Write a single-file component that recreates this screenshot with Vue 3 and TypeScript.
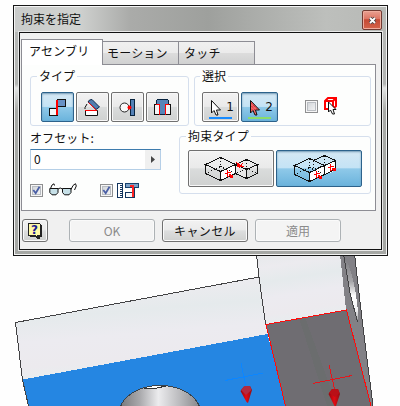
<script setup lang="ts">
import { ref } from 'vue'

const tabs: string[] = ['アセンブリ', 'モーション', 'タッチ']
const activeTab = ref(0)
const constraint = ref(0)
const selection = ref(2)
const solution = ref(1)
const offset = ref('0')
const pickPart = ref(false)
const preview = ref(true)
const predict = ref(true)
</script>

<template>
  <main class="stage">
    <svg class="scene" viewBox="0 0 400 406" width="400" height="406">
      <defs>
        <linearGradient id="face" x1="0" y1="0" x2=".2" y2="1">
          <stop offset="0" stop-color="#e6e9eb" /><stop offset=".2" stop-color="#ecebef" />
          <stop offset=".4" stop-color="#e5eaec" /><stop offset=".62" stop-color="#ecebf0" />
          <stop offset=".85" stop-color="#eceaee" /><stop offset="1" stop-color="#e7edef" />
        </linearGradient>
        <linearGradient id="bore" x1="0" x2="1">
          <stop offset="0" stop-color="#77777a" /><stop offset=".25" stop-color="#a9a9ac" />
          <stop offset=".48" stop-color="#ececee" /><stop offset=".75" stop-color="#b9b9bc" />
          <stop offset="1" stop-color="#858589" />
        </linearGradient>
        <linearGradient id="slot" x1="0" y1="0" x2="0" y2="1">
          <stop offset="0" stop-color="#77777b" /><stop offset=".4" stop-color="#a5a5a8" />
          <stop offset=".62" stop-color="#fff" /><stop offset=".82" stop-color="#f2f2f4" />
          <stop offset="1" stop-color="#96969a" />
        </linearGradient>
        <linearGradient id="cone" x1="0" x2="1">
          <stop offset="0" stop-color="#930810" /><stop offset=".5" stop-color="#e20b12" /><stop offset="1" stop-color="#8c1015" />
        </linearGradient>
      </defs>
      <g shape-rendering="crispEdges">
        <path d="M15.500 322.500 259 277 268 334 23 380Z" fill="url(#face)" />
        <path d="M256 254H340L347 310 266 325Z" fill="url(#face)" />
        <path d="M340 254H354L373 406H371L346 310Z" fill="#828186" />
        <path d="M23 379.500 267.500 334 285.500 406H28.500Z" fill="#2586e2" />
        <path d="M266 324.500 347 310 371 406H285.500Z" fill="#6f6d72" />
        <path d="M299 318 305 317 337 406H327Z" fill="#6b6d6e" />
        <path d="M343.500 254Q357 280 358.500 322 350 300 343.500 254Z" fill="url(#slot)" />
        <ellipse cx="160" cy="413" rx="40.500" ry="27.500" fill="url(#bore)" stroke="#38424b" />
        <path d="M145 388 154 386 165 387 157 388Z" fill="#fff" />
        <path d="M144 388H157L166 386" fill="none" stroke="#333" />
        <path d="M28.500 406 22.500 380 15.500 322.500 259 277M256.500 254 259 277 265.500 324M343.500 254 350 293 357.500 322M354.500 254 362.500 323 373 406" fill="none" stroke="#424244" />
        <path d="M285.500 406 266 324.500 346.500 310 371 406" fill="none" stroke="#ff0b0b" />
        <path d="M225 380.500 263 373M241 363 246 387" fill="none" stroke="#0c86ff" />
        <path d="M313 383.500 352 375.500M329 365 335 391" fill="none" stroke="#e6161b" />
      </g>
      <path d="M240.500 391 244 386.500 250 386 252 390 248 403 246.500 402Z" fill="url(#cone)" />
      <path d="M241 390 244 386.500 250 386 251.500 390 246 395Z" fill="#b32a3f" />
      <path d="M328.500 394 332 389 338 389 340 394 336 406H334.500Z" fill="url(#cone)" />
      <path d="M329 393 332 389 338 389 339.500 393 335 397Z" fill="#b91017" />
    </svg>

    <section class="dialog">
      <header class="titlebar">
        <h1>拘束を指定</h1>
        <button class="close" aria-label="閉じる">
          <svg width="9" height="9" viewBox="0 0 9 9">
            <path d="M2 2 7 7M7 2 2 7" stroke="#4a4245" stroke-width="3.400" />
            <path d="M2 2 7 7M7 2 2 7" stroke="#fff" stroke-width="1.800" />
          </svg>
        </button>
      </header>

      <div class="client">
        <nav class="tabs">
          <button v-for="(tab, i) in tabs" :key="tab" class="tab" :class="{ active: activeTab === i }" @click="activeTab = i">{{ tab }}</button>
        </nav>

        <div class="pane">
          <div class="row top">
            <fieldset class="group type">
              <legend>タイプ</legend>
              <button class="tool" :class="{ on: constraint === 0 }" @click="constraint = 0">
                <svg width="17" height="17" viewBox="0 0 17 17" shape-rendering="crispEdges">
                  <path d="M8.500 .5H16.500V7.500H8.500Z" fill="#6791c5" stroke="#111" />
                  <path d="M.5 9.500H8.500V16.500H.5Z" fill="#f4f7fa" stroke="#111" />
                  <path d="M8 1V16" stroke="#f00" stroke-width="2" />
                </svg>
              </button>
              <button class="tool" :class="{ on: constraint === 1 }" @click="constraint = 1">
                <svg width="17" height="17" viewBox="0 0 17 17">
                  <path d="M5.500 1 8 .5 15.500 8 12 10.500 4 3Z" fill="#527cae" stroke="#08294d" />
                  <path d="M1.500 11.500H13.500V16.500H1.500Z" fill="#fff" stroke="#111" />
                  <path d="M1 11.500H12.500L4.500 3.500" fill="none" stroke="#f00" />
                  <path d="M3 5 1 8.500V10" fill="none" stroke="#111" />
                </svg>
              </button>
              <button class="tool" :class="{ on: constraint === 2 }" @click="constraint = 2">
                <svg width="17" height="17" viewBox="0 0 17 17">
                  <circle cx="5.500" cy="8.500" r="4.500" fill="#f9f9f9" stroke="#222" />
                  <path d="M11.500 .5H15.500V16.500H11.500Z" fill="#5381b6" stroke="#07233e" shape-rendering="crispEdges" />
                  <circle cx="10.500" cy="8.500" r="2" fill="#f00" />
                </svg>
              </button>
              <button class="tool" :class="{ on: constraint === 3 }" @click="constraint = 3">
                <svg width="17" height="17" viewBox="0 0 17 17" shape-rendering="crispEdges">
                  <path d="M.5 5.500H5.500V15.500H.5ZM11.500 5.500H16.500V15.500H11.500Z" fill="#f2f5f7" stroke="#111" />
                  <path d="M3.500 .5H13.500L14.500 1.500V5.500H11.500V15.500H5.500V5.500H2.500V1.500Z" fill="#5684b8" stroke="#07233e" />
                  <path d="M2 5.500H5.500V15.500M15 5.500H11.500V15.500" fill="none" stroke="#f00" stroke-width="1.500" />
                </svg>
              </button>
            </fieldset>

            <fieldset class="group pick">
              <legend>選択</legend>
              <button v-for="n in [1, 2]" :key="n" class="tool cursor" :class="{ on: selection === n }" @click="selection = n">
                <svg width="23" height="19" viewBox="0 0 23 19">
                  <path d="M2.500 .5V13L5 10.500 7 15H9L7.500 10H11.500Z" :fill="n === 1 ? '#fff' : '#f36464'" stroke="#111" />
                  <path v-if="n === 2" d="M3.500 3.500 9 9M3.500 6 7 10M3.500 9 5 10.500" stroke="#c41420" stroke-dasharray="1 1" />
                  <rect x="0" y="17" width="23" height="2" :fill="n === 1 ? '#168bff' : '#8bdd6a'" shape-rendering="crispEdges" />
                </svg>
                <span class="number">{{ n }}</span>
              </button>
              <label class="check filter">
                <input v-model="pickPart" type="checkbox" /><span class="box"></span>
                <svg width="15" height="18" viewBox="0 0 15 18">
                  <path d="M1 4 4 1H12V9L9 12H1ZM1 4H9V12M9 4 12 1" fill="none" stroke="#f00" stroke-width="2" />
                  <path d="M4.500 5V15L6.500 13 8.500 17H10.500L9 12.500H12Z" fill="#fff" stroke="#111" />
                </svg>
              </label>
            </fieldset>
          </div>

          <div class="row lower">
            <div class="offset">
              <label class="caption" for="offset">オフセット:</label>
              <div class="field">
                <input id="offset" v-model="offset" type="text" />
                <button class="more" aria-label="値"><svg width="4" height="7" viewBox="0 0 4 7"><path d="M0 0 4 3.500 0 7Z" fill="#444" /></svg></button>
              </div>
              <div class="checks">
                <label class="check">
                  <input v-model="preview" type="checkbox" /><span class="box"><svg v-if="preview" width="9" height="9" viewBox="0 0 9 9"><path d="M1.300 4 3.700 7.200 7.500 .8" /></svg></span>
                  <svg class="glasses" width="28" height="13" viewBox="0 0 28 13">
                    <path d="M.8 5.500H9V9.500L7 11.800H3L.8 9.500ZM13.500 5.500H22V9.500L20 11.800H15.500L13.500 9.500Z" fill="#c6e0e7" stroke="#111" />
                    <path d="M9 6 11.200 5 13.500 6M1.500 5.500 3 2 5 .8 5.500 2.500M22 6.500 24 2.500 26.500 .7 27.300 3 25.500 7" fill="none" stroke="#111" />
                  </svg>
                </label>
                <label class="check">
                  <input v-model="predict" type="checkbox" /><span class="box"><svg v-if="predict" width="9" height="9" viewBox="0 0 9 9"><path d="M1.300 4 3.700 7.200 7.500 .8" /></svg></span>
                  <svg class="ruler" width="22" height="15" viewBox="0 0 22 15" shape-rendering="crispEdges">
                    <path d="M.5 .5H5.500V14.500H.5Z" fill="#fff" stroke="#12345d" />
                    <path d="M3 2.500H6M3 4.500H6M3 6.500H6M3 8.500H6M3 10.500H6M3 12.500H6" stroke="#12345d" />
                    <path d="M8.500 .5H21.500V4.500H8.500Z" fill="#7ca1c7" stroke="#17416d" />
                    <path d="M8.500 9.500H17.500V14.500H8.500Z" fill="#f5f8fa" stroke="#12345d" />
                    <path d="M13 3H16V14" fill="none" stroke="#f22" stroke-width="2" />
                    <path d="M17.500 5V14.500" stroke="#12345d" />
                  </svg>
                </label>
              </div>
            </div>

            <fieldset class="group solution">
              <legend>拘束タイプ</legend>
              <button class="tool wide" :class="{ on: solution === 0 }" @click="solution = 0">
                <svg width="86" height="37" viewBox="0 0 86 37" shape-rendering="crispEdges">
                  <path d="M32.500 21.500 47.500 14.500V23.500L32.500 30.500Z" fill="#fff" />
                  <path d="M48 14 58 20V28L48 23Z" fill="#e8e8e8" />
                  <path d="M17.500 14.500 32.500 7.500 47.500 14.500 32.500 21.500ZM17.500 14.500V23.500L32.500 30.500 47.500 23.500V14.500M32.500 21.500V30.500M47.500 14.500 58.500 9.500 69.500 14.500 58.500 19.500ZM47.500 23.500 58.500 28.500 69.500 23.500V14.500M58.500 19.500V28.500" fill="none" stroke="#111" />
                  <path d="M32.500 8V16.500L18 23.500M32.500 16.500 47 23.500M58.500 10V18.500L48 23.500M58.500 18.500 69 23.500" fill="none" stroke="#111" stroke-dasharray="1 2" />
                  <path d="M37 24 43 22M39.500 20V26.500L43 25M41 24 45 27M50 15 56 17M51 18 55 13M48 12 53 16" stroke="#f00" fill="none" />
                  <path d="M42 25H45V28H42ZM49 14H52V17H49Z" fill="#f00" />
                </svg>
              </button>
              <button class="tool wide" :class="{ on: solution === 1 }" @click="solution = 1">
                <svg width="86" height="37" viewBox="0 0 86 37" shape-rendering="crispEdges">
                  <path d="M33.500 22.500 59.500 10.500V20.500L33.500 31.500Z" fill="#fff" />
                  <path d="M18.500 15.500 33.500 8.500 48.500 15.500 33.500 22.500ZM18.500 15.500V24.500L33.500 31.500 59.500 19.500V10.500L48.500 5.500 37.500 10.500M33.500 22.500V31.500M48.500 15.500V24.500M48.500 15.500 59.500 10.500" fill="none" stroke="#111" />
                  <path d="M33.500 9V17.500L19 24.500M33.500 17.500 48 24.500M48.500 6V14.500L38 19.500M37.500 11V19" fill="none" stroke="#111" stroke-dasharray="1 2" />
                  <path d="M38 25 44 23M40.500 21V27.500L44 26M42 25 46 28M52 18 58 16M54.500 14V20.500L58 19M56 18 60 21" stroke="#f00" fill="none" />
                  <path d="M43 26H46V29H43ZM57 18H60V21H57Z" fill="#f00" />
                </svg>
              </button>
            </fieldset>
          </div>
        </div>

        <footer class="actions">
          <button class="push help" aria-label="ヘルプ">
            <svg width="14" height="16" viewBox="0 0 14 16" shape-rendering="crispEdges">
              <path d="M2 2H14V14H12V16H9L8 14H2Z" fill="#222" />
              <path d="M.5 .5H11.500L12.500 1.500V12.500H9.500V14.500L7 12.500H.5Z" fill="#fff9a8" stroke="#222" />
            </svg>
            <b class="mark">?</b>
          </button>
          <button class="push" disabled>OK</button>
          <button class="push cancel">キャンセル</button>
          <button class="push" disabled>適用</button>
        </footer>
      </div>
    </section>
  </main>
</template>

<style>
body { margin: 0; background: #fefefe; }
</style>

<style scoped>
* { box-sizing: border-box; }
.stage { position: relative; width: 400px; height: 406px; padding: 5px 0 0 13px; overflow: hidden; background: #fefefe; color: #111; font: 12px/18px "Noto Sans CJK JP", sans-serif; }
.scene { position: absolute; inset: 0; }
button, input { font: inherit; color: inherit; padding: 0; margin: 0; }
svg { display: block; flex: none; }
.dialog { position: relative; width: 375px; height: 251px; border: 1px solid #171717; padding: 1px 5px 5px; background: linear-gradient(#b8bab8 0, #b2b4b2 78px, #e2e4e3 82px, #a8aaa7 105px, #a5a7a4 100%); box-shadow: inset 0 0 0 1px #f4f4f4; }
.titlebar { display: flex; justify-content: space-between; height: 25px; margin: 0 -4px; padding: 3px 4px 0 6px; background: linear-gradient(90deg, #c9cbca, #d0d2d0 17%, #aaaba9 31%, #9ea09d 52%, #adafac 67%, #bdbfbc 84%, #b7b9b6); }
h1 { margin: 0; font-size: 12px; font-weight: 400; line-height: 17px; }
.close { display: grid; place-items: center; width: 20px; height: 20px; border: 1px solid #713a32; border-radius: 2px; background: linear-gradient(#e8a091, #dd7463 45%, #c44934 48%, #d5644b); box-shadow: inset 0 0 0 1px #efac9d; }
.client { height: 218px; padding: 6px 5px 0 1px; border: 1px solid #111; background: #f0f0f0; box-shadow: 0 0 0 1px #e9e9e9; }
.tabs { display: flex; align-items: flex-end; height: 26px; }
.tab { width: 76px; height: 24px; border: 1px solid #8d8d94; border-left-width: 0; background: linear-gradient(#f0f0f0, #ebebeb 48%, #dcdcdc 52%, #d0d1d1); text-align: left; padding: 0 0 1px 4px; line-height: 18px; letter-spacing: .2px; }
.tab:last-child { padding-left: 5px; }
.tab.active { position: relative; width: 82px; height: 26px; padding: 0 0 4px 7px; border: 1px solid #8d8d94; border-bottom: 0; background: #fff; }
.pane { width: 355px; height: 147px; margin-top: -1px; padding: 2px 4px 0 8px; border: 1px solid #8d8d94; background: #fdfefd; }
.row { display: flex; }
.top { justify-content: space-between; height: 60px; }
.group { display: flex; align-items: flex-start; gap: 2px; min-width: 0; height: 59px; margin: 0; padding: 7px 10px 0; border: 1px solid #d5dfed; border-radius: 3px; }
.group legend { height: 18px; padding: 0 2px; margin-left: -4px; }
.type { width: 159px; }
.pick { width: 177px; padding-left: 7px; }
.pick legend { margin-left: -2px; }
.tool { display: grid; place-items: center; flex: none; width: 33px; height: 30px; border: 1px solid #707070; border-radius: 2px; background: linear-gradient(#f2f2f2, #eaeaea 48%, #dadcdc 51%, #cfd1d0); box-shadow: inset 0 0 0 1px #f7f7f7; }
.tool.on { border-color: #2c628b; background: linear-gradient(#d5e8f4, #c4e3f5 48%, #8fc9e9 51%, #6ab3dc); box-shadow: inset 0 1px 2px #739ab5; }
.cursor { display: flex; width: 37px; padding: 1px 0 0 6px; }
.cursor svg { margin-top: 3px; }
.number { width: 8px; margin: -1px 0 0 -6px; font: 12px/20px "DejaVu Sans", sans-serif; }
.check { display: flex; align-items: center; }
.check input { appearance: none; width: 0; height: 0; }
.box { display: grid; place-items: center; width: 13px; height: 13px; border: 1px solid #8e8f90; background: linear-gradient(135deg, #cbcfd3, #fafafa); box-shadow: inset 0 0 0 1px #f6f6f6, inset 0 0 0 2px #b9bdc2; }
.box path { fill: none; stroke: #4a5fa5; stroke-width: 1.800; }
.filter { margin: 5px 0 0 25px; }
.filter svg { margin-left: 6px; }
.lower { height: 67px; }
.offset { width: 149px; padding-top: 3px; }
.caption { display: block; height: 19px; margin-top: -1px; padding-bottom: 1px; line-height: 18px; letter-spacing: .1px; }
.field { display: flex; width: 131px; height: 21px; margin-top: 1px; border: 1px solid #b5cfe7; border-top-color: #3d7bad; background: #fff; }
.field input { width: 114px; padding: 0 0 1px 3px; border: 0; outline: 0; background: none; }
.more { display: grid; place-items: center; width: 15px; border: 0; background: #f0f0f0; }
.checks { display: flex; gap: 23px; height: 15px; margin-top: 13px; }
.glasses { margin: -2px 0 0 6px; }
.ruler { margin-left: 4px; }
.solution { width: 192px; height: 67px; padding: 5px 8px 0; }
.solution legend { margin-left: -2px; letter-spacing: .2px; }
.wide { width: 86px; height: 37px; overflow: hidden; }
.wide svg { margin: -1px; }
.actions { display: flex; gap: 7px; margin: 8px 0 0 1px; }
.push { display: grid; place-items: center; width: 86px; height: 23px; border: 1px solid #707070; border-radius: 3px; background: linear-gradient(#f2f2f2, #ebebeb 48%, #dddede 51%, #cfd0cf); box-shadow: inset 0 0 0 1px #fafafa; line-height: 18px; }
.push:disabled { border-color: #adb2b5; background: #f4f4f4; color: #8b8b8b; }
.cancel { letter-spacing: .4px; }
.help { width: 26px; margin-right: 14px; }
.help > * { grid-area: 1 / 1; }
.mark { z-index: 1; margin: -2px 0 0 -1px; color: #1a1b93; font: bold 12px/14px "DejaVu Sans", sans-serif; }
</style>
